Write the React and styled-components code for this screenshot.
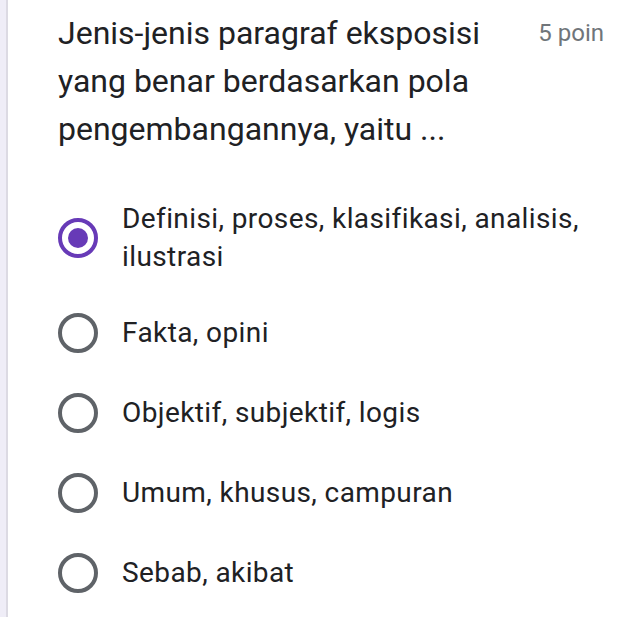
import React from 'react';
import styled, { createGlobalStyle } from 'styled-components';

const GlobalStyle = createGlobalStyle`
  html, body {
    margin: 0;
    padding: 0;
    background: #ffffff;
  }
  body {
    font-family: Roboto, "Noto Sans", Arial, sans-serif;
    -webkit-font-smoothing: antialiased;
  }
`;

const Page = styled.div`
  display: flex;
  min-height: 617px;
  background: #ffffff;
`;

const Stripe = styled.div`
  width: 6px;
  flex: none;
  background: #efedf7;
  border-right: 2px solid #dcdae3;
`;

const Card = styled.div`
  flex: 1;
  padding: 9px 24px 0 50px;
`;

const Header = styled.div`
  display: flex;
  align-items: flex-start;
  justify-content: space-between;
`;

const Title = styled.div`
  width: 450px;
  font-size: 32px;
  line-height: 48px;
  color: #202124;
`;

const Points = styled.div`
  font-size: 24px;
  line-height: 48px;
  color: #70757a;
  white-space: nowrap;
`;

const Options = styled.div`
  display: flex;
  flex-direction: column;
  gap: 40px;
  margin-top: 50px;
`;

const Option = styled.label`
  display: flex;
  align-items: center;
  gap: 24px;
  min-height: 40px;
  cursor: pointer;
`;

const Radio = styled.span`
  position: relative;
  flex: none;
  width: 40px;
  height: 40px;
  box-sizing: border-box;
  border-radius: 50%;
  border: 4px solid ${({ checked }) => (checked ? '#673ab7' : '#5f6368')};

  &::after {
    content: '';
    position: absolute;
    top: 50%;
    left: 50%;
    width: 20px;
    height: 20px;
    border-radius: 50%;
    background: #673ab7;
    transform: translate(-50%, -50%);
    display: ${({ checked }) => (checked ? 'block' : 'none')};
  }
`;

const OptionText = styled.span`
  margin: -3px 0;
  font-size: 28px;
  line-height: 38px;
  color: #202124;
  letter-spacing: 0.4px;
`;

const choices = [
  'Definisi, proses, klasifikasi, analisis, ilustrasi',
  'Fakta, opini',
  'Objektif, subjektif, logis',
  'Umum, khusus, campuran',
  'Sebab, akibat'
];

const App = () => (
  <>
    <GlobalStyle />
    <Page>
      <Stripe />
      <Card>
        <Header>
          <Title>Jenis-jenis paragraf eksposisi yang benar berdasarkan pola pengembangannya, yaitu ...</Title>
          <Points>5 poin</Points>
        </Header>
        <Options>
          {choices.map((c, i) => (
            <Option key={c}>
              <Radio checked={i === 0} />
              <OptionText>{c}</OptionText>
            </Option>
          ))}
        </Options>
      </Card>
    </Page>
  </>
);

export default App;
